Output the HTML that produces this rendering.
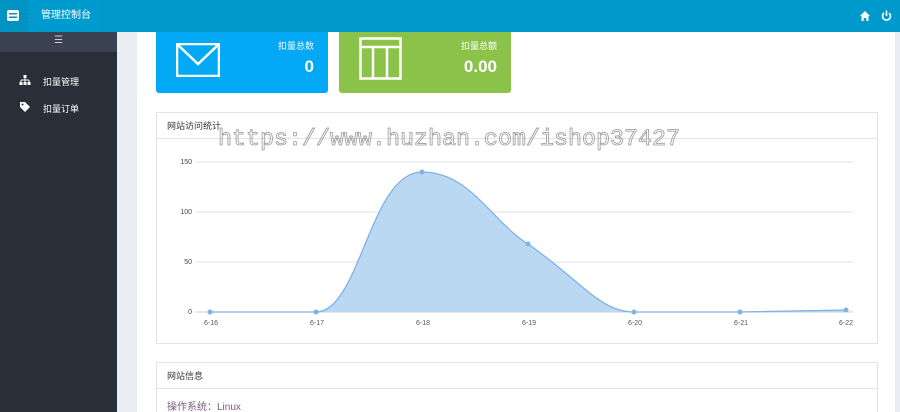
<!DOCTYPE html>
<html><head><meta charset="utf-8"><style>
*{margin:0;padding:0;box-sizing:border-box}
html{width:900px;height:412px;overflow:hidden}
body{width:900px;height:412px;overflow:hidden;font-family:"Liberation Sans","Noto Sans CJK SC",sans-serif;background:#eaedf1;position:relative;font-size:12px}
.hdr{position:absolute;left:0;top:0;width:900px;height:32px;background:#0099cb}
.logo{position:absolute;left:0;top:0;width:28px;height:32px;background:#0093c2}
.ttl{position:absolute;left:28px;top:0;width:75px;height:32px;background:#009bce;color:#fff;font-size:10px;line-height:32px;padding-left:13px;border-right:1px solid #0090bf}
.side{position:absolute;left:0;top:32px;width:117px;height:380px;background:#292f38}
.tog{height:20px;background:#3a4252;color:#ccc;text-align:center;line-height:18px;font-size:10px}
.mi{position:absolute;left:43px;color:#fff;font-size:9px}
.main{position:absolute;left:137px;top:32px;width:758px;height:380px;background:#fff;overflow:hidden}
.card{position:absolute;top:0;width:172px;height:61px;border-radius:0 0 3px 3px;color:#fff}
.card .l{position:absolute;right:14px;top:7px;font-size:9px}
.card .v{position:absolute;right:14px;top:25px;font-size:17px;font-weight:bold}
.pan{position:absolute;left:19px;width:722px;border:1px solid #e3e3e3;background:#fff}
.pan .h{height:26px;border-bottom:1px solid #e3e3e3;font-size:9px;color:#333;line-height:26px;padding-left:10px}
</style></head><body>
<div class="hdr"></div>
<div class="logo"><svg width="28" height="32"><rect x="7" y="10" width="12" height="11" rx="2" fill="#fff"/><rect x="9" y="13" width="8" height="1.5" fill="#0093c2"/><rect x="9" y="16.5" width="8" height="1.5" fill="#0093c2"/></svg></div>
<div class="ttl">管理控制台</div>
<svg style="position:absolute;left:858px;top:9px" width="34" height="14"><path d="M2 7 L7 2 L12 7 H10.5 V12 H8.3 V9 H5.7 V12 H3.5 V7Z" fill="#fff"/><path d="M26 4 A4 4 0 1 0 31 4" stroke="#fff" stroke-width="1.6" fill="none"/><path d="M28.5 1.5 V7" stroke="#fff" stroke-width="1.6"/></svg>
<div class="side"><div class="tog">☰</div>
<svg style="position:absolute;left:19px;top:43px" width="12" height="10"><rect x="4.5" y="0" width="3" height="3" fill="#fff"/><path d="M6 3V5M2 5H10M2 5V7M6 5V7M10 5V7" stroke="#fff"/><rect x="0.5" y="7" width="3" height="3" fill="#fff"/><rect x="4.5" y="7" width="3" height="3" fill="#fff"/><rect x="8.5" y="7" width="3" height="3" fill="#fff"/></svg>
<div class="mi" style="top:43px">扣量管理</div>
<svg style="position:absolute;left:19px;top:69px" width="12" height="11"><path d="M1 1H6L11 6L6 11L1 6Z" fill="#fff"/><circle cx="3.5" cy="3.5" r="1" fill="#292f38"/></svg>
<div class="mi" style="top:70px">扣量订单</div>
</div>
<div class="main">
<div class="card" style="left:19px;background:#03a9f4"><svg style="position:absolute;left:20px;top:11px" width="44" height="34"><rect x="1" y="1" width="42" height="32" fill="none" stroke="#fff" stroke-width="2.5"/><path d="M2 2L22 21L42 2" fill="none" stroke="#fff" stroke-width="2.5"/></svg><div class="l">扣量总数</div><div class="v">0</div></div>
<div class="card" style="left:202px;background:#8bc34a"><svg style="position:absolute;left:20px;top:5px" width="44" height="44"><rect x="1.5" y="1.5" width="40" height="40" fill="none" stroke="#fff" stroke-width="2.5"/><path d="M1.5 10H41.5M14 10V41.5M28 10V41.5" stroke="#fff" stroke-width="2.5"/></svg><div class="l">扣量总额</div><div class="v">0.00</div></div>
<div class="pan" style="top:80px;height:232px"><div class="h">网站访问统计</div></div>
<div class="pan" style="top:330px;height:60px"><div class="h">网站信息</div><div style="padding:9px 10px;font-size:10px;color:#7a5c7a">操作系统：Linux</div></div>
</div>
<svg style="position:absolute;left:0;top:0" width="900" height="412">
<g stroke="#e0e0e0"><path d="M196 162H853M196 212H853M196 262H853"/><path d="M196 312H853" stroke="#ccc"/></g>
<g font-size="7" fill="#444" text-anchor="end"><text x="192" y="164">150</text><text x="192" y="214">100</text><text x="192" y="264">50</text><text x="192" y="314">0</text></g>
<path d="M210 312 L316 312 C360 312 370 172 422 172 C470 172 490 220 528 244 C580 280 600 312 634 312 L740 312 L846 310 L846 312 Z" fill="#bad8f2"/>
<path d="M210 312 L316 312 C360 312 370 172 422 172 C470 172 490 220 528 244 C580 280 600 312 634 312 L740 312 L846 310" fill="none" stroke="#7fb2e5" stroke-width="1.3"/>
<g fill="#7fb2e5"><circle cx="210" cy="312" r="2.5"/><circle cx="316" cy="312" r="2.5"/><circle cx="422" cy="172" r="2.5"/><circle cx="528" cy="244" r="2.5"/><circle cx="634" cy="312" r="2.5"/><circle cx="740" cy="312" r="2.5"/><circle cx="846" cy="310" r="2.5"/></g>
<g font-size="7" fill="#555" text-anchor="middle"><text x="211" y="325">6-16</text><text x="317" y="325">6-17</text><text x="423" y="325">6-18</text><text x="529" y="325">6-19</text><text x="635" y="325">6-20</text><text x="741" y="325">6-21</text><text x="846" y="325">6-22</text></g>
<text x="218" y="145" font-family="Liberation Mono,monospace" font-size="23.3" fill="none" stroke="#999" stroke-width="0.8" textLength="462" lengthAdjust="spacingAndGlyphs">https://www.huzhan.com/ishop37427</text>
</svg>
</body></html>
